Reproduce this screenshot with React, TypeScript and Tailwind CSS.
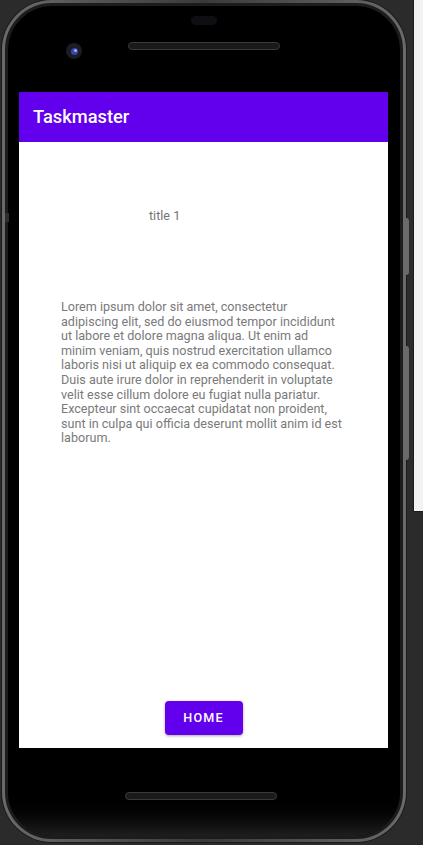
import React from "react";

const loremLines = [
  "Lorem ipsum dolor sit amet, consectetur",
  "adipiscing elit, sed do eiusmod tempor incididunt",
  "ut labore et dolore magna aliqua. Ut enim ad",
  "minim veniam, quis nostrud exercitation ullamco",
  "laboris nisi ut aliquip ex ea commodo consequat.",
  "Duis aute irure dolor in reprehenderit in voluptate",
  "velit esse cillum dolore eu fugiat nulla pariatur.",
  "Excepteur sint occaecat cupidatat non proident,",
  "sunt in culpa qui officia deserunt mollit anim id est",
  "laborum.",
];

export default function App() {
  return (
    <div
      className="w-[423px] h-[845px] bg-[#2b2b2b] flex overflow-hidden"
      style={{ fontFamily: "Roboto, 'Noto Sans', sans-serif" }}
    >
      {/* Phone */}
      <div className="relative ml-[2px] w-[404px] h-[842px] rounded-[50px] bg-gradient-to-r from-[#6a6a6a] via-[#3a3a3a] to-[#6a6a6a] p-[3px] shadow-[0_0_0_1px_#1a1a1a]">
        {/* side buttons */}
        <div className="absolute right-[-3px] top-[218px] w-[3px] h-[57px] bg-[#6a6a6a] rounded-r-sm" />
        <div className="absolute right-[-3px] top-[346px] w-[3px] h-[114px] bg-[#6a6a6a] rounded-r-sm" />
        <div className="absolute left-[3px] top-[213px] w-[4px] h-[9px] bg-[#2e2e2e]" />
        <div className="h-full w-full rounded-[47px] bg-black border-[3px] border-[#1c1c1c] flex flex-col overflow-hidden">
          {/* top bezel */}
          <div className="relative h-[86px] flex flex-col items-center shrink-0">
            <div className="mt-[10px] w-[26px] h-[9px] rounded-full bg-[#0e0e13]" />
            <div className="mt-[17px] w-[152px] h-[8px] rounded-full bg-[#1a1a1a] border border-[#3a3a3a]" />
            <div className="absolute left-[58px] top-[37px] w-[16px] h-[16px] rounded-full bg-[#1c1c22] flex items-center justify-center">
              <div className="w-[7px] h-[7px] rounded-full bg-[#3446a8] flex items-start justify-end">
                <div className="w-[3px] h-[3px] rounded-full bg-[#9fb0ff] mt-[1px] mr-[1px]" />
              </div>
            </div>
          </div>
          {/* screen */}
          <div className="ml-[11px] w-[369px] h-[656px] bg-white flex flex-col shrink-0">
            <div className="h-[50px] bg-[#6200EE] flex items-center pl-[14px] shrink-0">
              <span className="text-white text-[18.3px] font-medium leading-none">Taskmaster</span>
            </div>
            <div className="mt-[66px] ml-[130px] text-[12.6px] leading-[15px] text-[#757575]">title 1</div>
            <p className="mt-[77px] ml-[42px] w-[300px] text-[12.6px] leading-[14.6px] text-[#7a7a7a]">
              {loremLines.map((l, i) => (
                <span key={i} className="block whitespace-nowrap">
                  {l}
                </span>
              ))}
            </p>
            <div className="flex-1" />
            <div className="flex justify-center mb-[13px]">
              <button className="w-[78px] h-[34px] rounded-[4px] bg-[#6200EE] text-white text-[12.6px] font-medium tracking-[0.09em] shadow-[0_1px_3px_rgba(0,0,0,0.35)]">
                HOME
              </button>
            </div>
          </div>
          {/* bottom bezel */}
          <div className="flex-1 flex flex-col items-center bg-gradient-to-b from-black via-black to-[#1e1e1e]">
            <div className="mt-[44px] ml-[-6px] w-[152px] h-[8px] rounded-full bg-[#1a1a1a] border border-[#3a3a3a]" />
          </div>
        </div>
      </div>
      {/* right panel */}
      <div className="ml-[7px] w-[10px] h-[512px] bg-[#f2f2f2] border-l border-b border-[#1a1a1a] shrink-0" />
    </div>
  );
}
